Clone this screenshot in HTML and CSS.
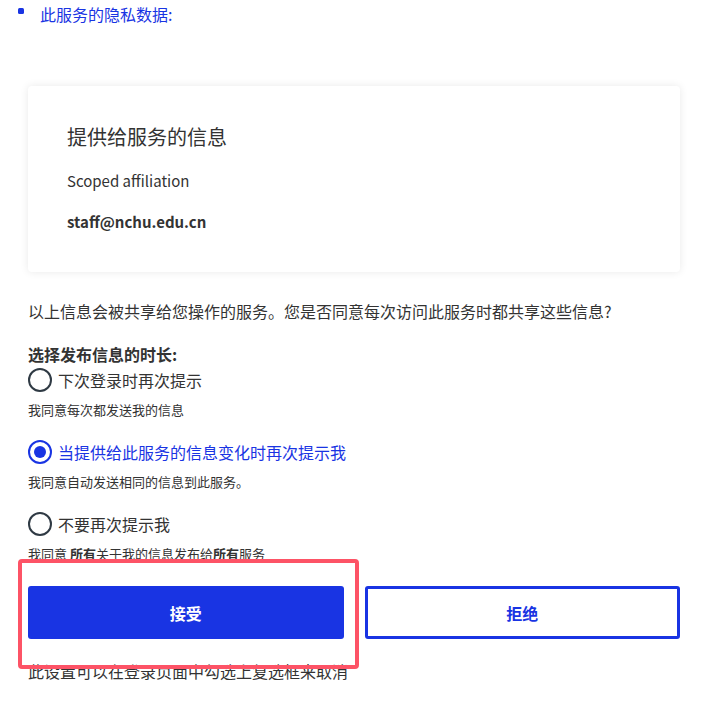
FILE: index.html
```html
<!DOCTYPE html>
<html lang="zh-CN">
<head>
<meta charset="utf-8">
<title>信息发布</title>
<link rel="stylesheet" href="styles.css">
</head>
<body>
<div class="page">
  <div class="privacy-head"><span class="dot"></span><span>此服务的隐私数据:</span></div>

  <section class="card">
    <h2 class="card-title">提供给服务的信息</h2>
    <div class="attr-name">Scoped affiliation</div>
    <div class="attr-value">staff@nchu.edu.cn</div>
  </section>

  <p class="question">以上信息会被共享给您操作的服务。您是否同意每次访问此服务时都共享这些信息?</p>

  <div class="duration-title">选择发布信息的时长:</div>

  <div class="option first">
    <span class="radio"></span><span class="label">下次登录时再次提示</span>
  </div>
  <div class="hint">我同意每次都发送我的信息</div>

  <div class="option">
    <span class="radio checked"></span><span class="label active">当提供给此服务的信息变化时再次提示我</span>
  </div>
  <div class="hint">我同意自动发送相同的信息到此服务。</div>

  <div class="option">
    <span class="radio"></span><span class="label">不要再次提示我</span>
  </div>
  <div class="hint">我同意 <b>所有</b>关于我的信息发布给<b>所有</b>服务</div>

  <div class="actions">
    <button class="btn btn-accept">接受</button>
    <button class="btn btn-reject">拒绝</button>
  </div>

  <p class="footnote">此设置可以在登录页面中勾选上复选框来取消</p>

  <div class="highlight"></div>
</div>
</body>
</html>
```

FILE: styles.css
```css
* { box-sizing: border-box; }

html, body {
  margin: 0;
  padding: 0;
  background: #ffffff;
}

body {
  font-family: "Noto Sans CJK SC", "Noto Sans", sans-serif;
  color: #333333;
  font-size: 16px;
  line-height: 24px;
}

.page {
  position: relative;
  padding: 0 33px 0 28px;
}

.privacy-head {
  display: flex;
  align-items: center;
  gap: 16px;
  margin: 2px 0 0 -10px;
  color: #1934e3;
  font-size: 16px;
  line-height: 24px;
}

.dot {
  width: 6px;
  height: 6px;
  border-radius: 1.5px;
  background: #1934e3;
  margin-top: -6px;
}

.card {
  margin-top: 60px;
  background: #ffffff;
  border-radius: 4px;
  box-shadow: 0 0 9px rgba(0, 0, 0, 0.09);
  padding: 37px 39px 39px;
}

.card-title {
  margin: 0;
  font-size: 20px;
  line-height: 28px;
  font-weight: 400;
}

.attr-name {
  margin-top: 19px;
  font-size: 15px;
  line-height: 22px;
}

.attr-value {
  margin-top: 19px;
  font-size: 15px;
  line-height: 22px;
  font-weight: 700;
}

.question {
  margin: 27px 0 0;
}

.duration-title {
  margin-top: 19px;
  font-weight: 700;
}

.option {
  display: flex;
  align-items: center;
  gap: 6px;
  margin-top: 20px;
  height: 24px;
}

.option.first {
  margin-top: 2px;
}

.radio {
  flex: none;
  width: 24px;
  height: 24px;
  border-radius: 50%;
  border: 2px solid #2f3a44;
  display: flex;
  align-items: center;
  justify-content: center;
}

.radio.checked {
  border-color: #1934e3;
}

.radio.checked::after {
  content: "";
  width: 12px;
  height: 12px;
  border-radius: 50%;
  background: #1934e3;
}

.label.active {
  color: #1934e3;
}

.hint {
  margin-top: 8px;
  font-size: 13px;
  line-height: 20px;
}

.actions {
  display: grid;
  grid-template-columns: 1fr 1fr;
  gap: 21px;
  margin-top: 22px;
}

.btn {
  height: 53px;
  border-radius: 3px;
  font-family: inherit;
  font-size: 16px;
  font-weight: 700;
  cursor: pointer;
}

.btn-accept {
  background: #1934e3;
  color: #ffffff;
  border: none;
}

.btn-reject {
  background: #ffffff;
  color: #1934e3;
  border: 3px solid #1934e3;
}

.footnote {
  margin: 20px 0 0;
}

.highlight {
  position: absolute;
  left: 18px;
  top: 557px;
  width: 341px;
  height: 110px;
  border: 4px solid #fd5366;
  border-radius: 4px;
  pointer-events: none;
}
```
